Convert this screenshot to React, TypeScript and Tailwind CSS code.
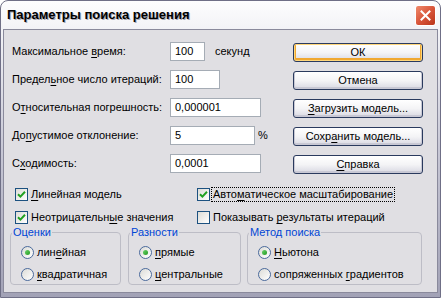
import React from "react";

const font = { fontFamily: '"Liberation Sans", Arial, sans-serif' };

function U({ children }: { children: React.ReactNode }) {
  return <span className="underline underline-offset-[2px]">{children}</span>;
}

function CheckBox({ checked }: { checked?: boolean }) {
  return (
    <span className="w-[13px] h-[13px] shrink-0 border border-[#1c5180] bg-gradient-to-br from-[#dcdcd7] to-white flex items-center justify-center">
      {checked && (
        <svg width="9" height="9" viewBox="0 0 9 9">
          <path d="M1 4.2 L3.4 6.6 L8 1.8" stroke="#21a121" strokeWidth="2" fill="none" />
        </svg>
      )}
    </span>
  );
}

function Radio({ checked }: { checked?: boolean }) {
  return (
    <span className="w-[13px] h-[13px] shrink-0 rounded-full border border-[#4a6a9c] bg-gradient-to-br from-[#dcdcd7] to-white flex items-center justify-center">
      {checked && <span className="w-[5px] h-[5px] rounded-full bg-gradient-to-br from-[#6ad36a] to-[#1a9a1a]" />}
    </span>
  );
}

function Field({ label, width, value, after }: { label: React.ReactNode; width: string; value: string; after?: string }) {
  return (
    <div className="flex items-center h-[19px]">
      <span className="w-[158px] shrink-0">{label}</span>
      <span className={`${width} h-[19px] border border-[#a5acb5] bg-white pl-[4px] flex items-center`}>{value}</span>
      {after && <span className={after === "%" ? "ml-[3px]" : "ml-[10px]"}>{after}</span>}
    </div>
  );
}

function Btn({ children, def }: { children: React.ReactNode; def?: boolean }) {
  return (
    <div
      className={`w-[130px] h-[19px] rounded-[3px] border border-[#2a3a5e] bg-gradient-to-b from-white via-[#f4f4f6] to-[#d8d8e2] flex items-center justify-center ${
        def ? "shadow-[inset_0_0_0_1px_#ffd67a,inset_0_-1px_0_2px_#f0a830]" : "shadow-[inset_0_-1px_0_1px_#c8c8d4]"
      }`}
    >
      {children}
    </div>
  );
}

function Group({ title, width, ml, items }: { title: string; width: string; ml: string; items: [React.ReactNode, boolean][] }) {
  return (
    <fieldset className={`${width} ${ml} h-[59px] border border-[#bdbdc6] rounded-[4px] px-0 pl-[10px] pt-[8px]`}>
      <legend className="-ml-[9px] px-[1px] leading-[12px] text-[#0046d5]">{title}</legend>
      <div className="flex flex-col gap-[9px]">
        {items.map(([label, on], i) => (
          <div key={i} className="flex items-center gap-[3px] h-[13px]">
            <Radio checked={on} />
            <span>{label}</span>
          </div>
        ))}
      </div>
    </fieldset>
  );
}

export default function App() {
  return (
    <div className="w-[441px] h-[298px] bg-white text-[11px] text-black" style={font}>
      <div className="w-full h-full rounded-t-[8px] bg-gradient-to-b from-[#fdfdfe] via-[#c8c8d6] to-[#a2a2b6] border border-[#6f6f86] flex flex-col overflow-hidden">
        {/* title bar */}
        <div className="h-[28px] shrink-0 flex items-center pl-[6px] pr-[4px]">
          <span className="text-[13px] font-bold text-black [text-shadow:1px_1px_0_#a8a8b4]">Параметры поиска решения</span>
          <div className="ml-auto w-[21px] h-[21px] rounded-[3px] border border-white bg-gradient-to-br from-[#ef8a6c] via-[#d9553a] to-[#b93418] flex items-center justify-center">
            <svg width="11" height="11" viewBox="0 0 11 11">
              <path d="M1.5 1.5 L9.5 9.5 M9.5 1.5 L1.5 9.5" stroke="white" strokeWidth="2" strokeLinecap="square" />
            </svg>
          </div>
        </div>

        {/* client */}
        <div className="flex-1 mx-[2px] mb-[4px] border border-[#8a8a9c] bg-[#e0dfe3] pt-[12px]">
          <div className="flex">
            <div className="w-[289px] pl-[8px] flex flex-col gap-[9px]">
              <Field label={<>Максимальное <U>в</U>ремя:</>} width="w-[35px]" value="100" after="секунд" />
              <Field label={<>Предел<U>ь</U>ное число итераций:</>} width="w-[50px]" value="100" />
              <Field label={<>О<U>т</U>носительная погрешность:</>} width="w-[91px]" value="0,000001" />
              <Field label={<>До<U>п</U>устимое отклонение:</>} width="w-[85px]" value="5" after="%" />
              <Field label={<>С<U>х</U>одимость:</>} width="w-[91px]" value="0,0001" />
            </div>
            <div className="pt-[1px] flex flex-col gap-[9px]">
              <Btn def>ОК</Btn>
              <Btn>Отмена</Btn>
              <Btn>
                <span><U>З</U>агрузить модель...</span>
              </Btn>
              <Btn>
                <span>Сохр<U>а</U>нить модель...</span>
              </Btn>
              <Btn>
                <span><U>С</U>правка</span>
              </Btn>
            </div>
          </div>

          <div className="mt-[14px] pl-[11px] grid grid-cols-[182px_1fr] gap-y-[10px]">
            <div className="flex items-center gap-[3px] h-[13px]">
              <CheckBox checked />
              <span><U>Л</U>инейная модель</span>
            </div>
            <div className="flex items-center gap-[1px] h-[13px]">
              <CheckBox checked />
              <span className="border border-dotted border-black px-[1px] leading-[13px]">Авто<U>м</U>атическое масштабирование</span>
            </div>
            <div className="flex items-center gap-[3px] h-[13px]">
              <CheckBox checked />
              <span>Неотрицательн<U>ы</U>е значения</span>
            </div>
            <div className="flex items-center gap-[3px] h-[13px]">
              <CheckBox />
              <span>Показывать <U>р</U>езультаты итераций</span>
            </div>
          </div>

          <div className="flex mt-[2px]">
            <Group title="Оценки" width="w-[111px]" ml="ml-[6px]" items={[[<>лин<U>е</U>йная</>, true], [<><U>к</U>вадратичная</>, false]]} />
            <Group title="Разности" width="w-[113px]" ml="ml-[7px]" items={[[<><U>п</U>рямые</>, true], [<><U>ц</U>ентральные</>, false]]} />
            <Group title="Метод поиска" width="w-[175px]" ml="ml-[6px]" items={[[<><U>Н</U>ьютона</>, true], [<>сопряженных <U>г</U>радиентов</>, false]]} />
          </div>
        </div>
      </div>
    </div>
  );
}
